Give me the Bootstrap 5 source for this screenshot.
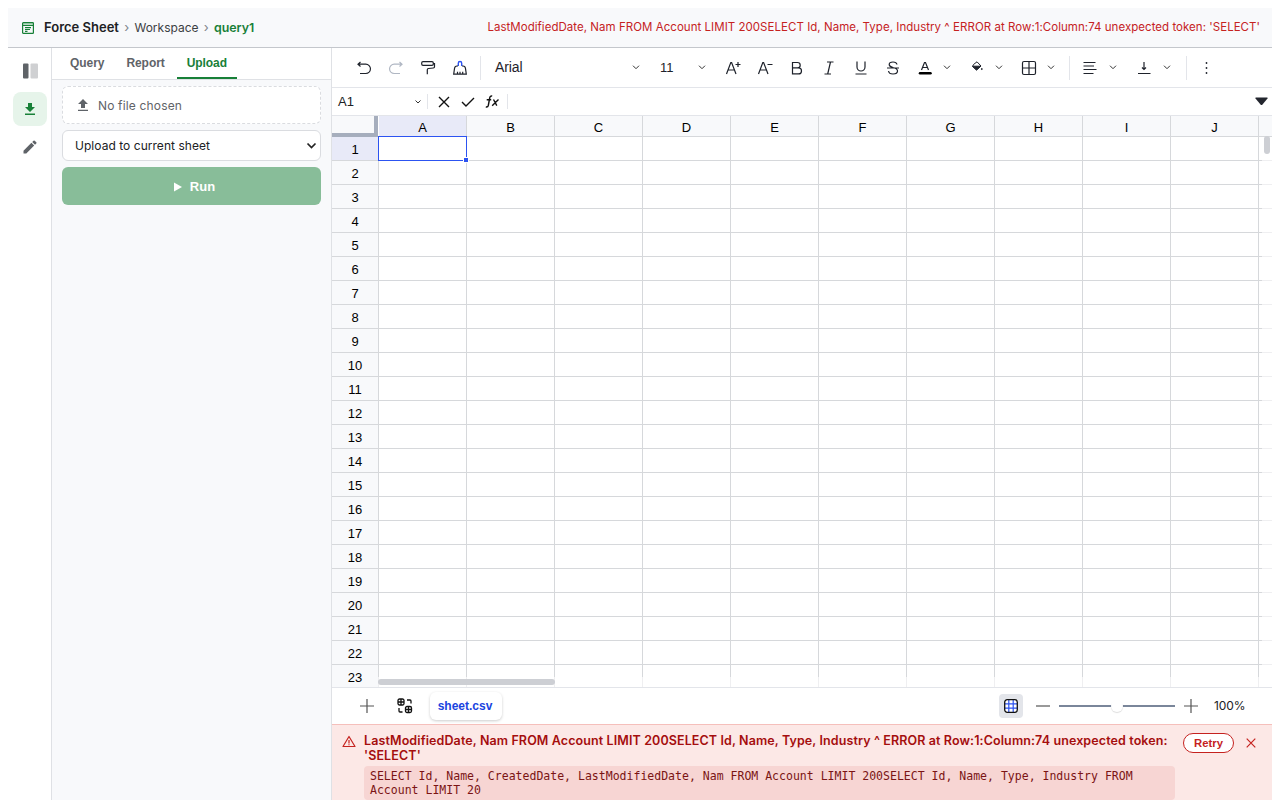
<!DOCTYPE html>
<html lang="en">
<head>
<meta charset="utf-8">
<title>Force Sheet</title>
<link rel="stylesheet" href="https://cdn.jsdelivr.net/npm/bootstrap@5.3.0/dist/css/bootstrap.min.css">
<style>
body{font:13px/1.2 Inter,sans-serif;color:#202124;background:#fff;height:100vh;overflow:hidden;padding:8px 8px 0}
svg{display:block;flex:none}
.app{height:792px}
.topbar{height:40px;background:#f8f9fb;border-bottom:1px solid #c4c7cc;padding:0 12px 0 14px}
.topbar b,.topbar span{padding-top:1px}
.crumb{color:#80868b;width:15.5px;text-align:center}
.ws{font-size:12px;width:64px;color:#3c4043}
.green{color:#188038}
.toperr{color:#c5221f;font-size:11.5px;letter-spacing:.035px}
.rail{width:44px;border-right:1px solid #dfe1e5;padding:6px 0 0 5px;color:#5f6368}
.rail .tool{width:34px;height:34px;margin-bottom:4px;border-radius:8px}
.rail .on{background:#e6f4ea;color:#188038}
.side{width:280px;background:#f8f9fb;border-right:1px solid #dfe1e5}
.tabs{height:32px;background:#fff;border-bottom:1px solid #dfe1e5;padding-left:8px;gap:2px}
.tab{font:bold 12px/31px "Liberation Sans",Arial,sans-serif;letter-spacing:-.06px;color:#5f6368;padding:0 10px;height:31px;border-bottom:2px solid transparent}
.tab.on{color:#188038;border-color:#188038}
.panel{padding:6px 10px}
.file{height:38px;border:1px dashed #dadce0;border-radius:6px;background:#fff;color:#5f6368;padding-left:15px;gap:10px;font-size:12px;letter-spacing:.16px}
.file span{padding-top:2px}
.pick{height:31px;border:1px solid #dadce0;border-radius:6px;background:#fff;margin-top:6px;padding:0 3px 0 12px;font-size:12px;letter-spacing:.04px}
.pick span{padding-top:2px}
.run{height:38px;border-radius:6px;background:#88bd99;color:#fff;margin-top:6px;gap:8px;padding:1px 0 0 6px;font:bold 13px/1.2 "Liberation Sans",Arial,sans-serif}
.main{min-width:0;flex:1}
.arial{font-family:"Liberation Sans",Arial,sans-serif}
.toolbar{height:40px;border-bottom:1px solid #e3e5ea;padding-left:24px;color:#1e222b}
.sep{width:1px;height:24px;background:#e3e5ea}
.fbar{height:28px;border-bottom:1px solid #e3e5ea}
.fbar .sep{height:15px}
.sheet{height:571px;overflow:hidden;position:relative;font:13px/23px "Liberation Sans",Arial,sans-serif;color:#000}
.line{display:grid;grid-template-columns:47px repeat(10,88px) 13px;grid-template-rows:100%;height:24px}
.line>div{border-right:1px solid #d6d8db;border-bottom:1px solid #d6d8db;text-align:center}
.line>div:last-child{border-right:0}
.line>div:first-child{background:#f8f9fb;line-height:26px}
.line.head{height:21px;line-height:23px}
.line.head>div{background:#f8f9fb}
.line.head>div:first-child{border-right:4px solid #a6aebd;border-bottom:4px solid #a6aebd;margin-right:1px}
.line.head>div.sel,.line>div.sel:first-child{background:#e8eaf8}
.cursor{position:absolute;left:46px;top:20px;width:89px;height:25px;border:1px solid #2c53f1}
.cursor i{position:absolute;right:-2px;bottom:-2px;width:4px;height:4px;background:#2c53f1;outline:1px solid #fff}
.vs{position:absolute;left:930px;top:21px;width:10px;height:550px;background:#fff9}
.vs i{position:absolute;left:2px;top:-1px;width:6px;height:18px;border-radius:3px;background:#cdcfd4}
.hs{position:absolute;left:46px;top:561px;width:894px;height:10px;background:#fff9}
.hs i{position:absolute;left:0;top:2px;width:177px;height:6px;border-radius:3px;background:#cdcfd4}
.foot{height:37px;border-top:1px solid #e3e5ea;padding-left:28px}
.sheettab{width:72px;height:28px;margin-left:17px;padding-right:2px;border-radius:6px;box-shadow:0 1px 3px #0003;color:#1a44e0;font-size:12px;font-weight:700}
.gridbtn{width:24px;height:24px;border-radius:4px;background:#e3e5ea;margin-right:13px}
.track{width:116px;height:2px;background:#7a869a;margin:0 8px 0 9px;position:relative}
.track i{position:absolute;left:52px;top:-5px;width:12px;height:12px;border-radius:50%;background:#fff;box-shadow:0 1px 1px #0002}
.fault{flex:1;background:#fce8e6;border-top:1px solid #f5bfbb;color:#a50e0e;padding:8px 0 0 10px}
.fault h6{font:600 12.5px/15px Inter,sans-serif;letter-spacing:.11px;margin:0 0 3px;width:811px}
.sql{font:11.53px/14px "DejaVu Sans Mono",monospace;background:#f7d5d3;color:#7b1414;border-radius:4px;padding:3px 6px;height:34px;width:811px}
.retry{width:51px;height:20px;border:1px solid #c5221f;border-radius:10px;background:#fff;color:#c5221f;font-weight:700;font-size:11.3px;margin-left:8px;padding-top:1px}
</style>
</head>
<body>
<div class="app d-flex flex-column">
<header class="topbar d-flex align-items-center flex-shrink-0">
<svg width="12" height="12" viewBox="0 0 12 12" fill="none" stroke="#188038" stroke-width="1.2"><path fill="#b9dcc4" stroke="none" d="M1 1h10v2H1z"/><rect x=".6" y=".6" width="10.8" height="10.8" rx=".7"/><path d="M1 3.5h10M3 5.6h6M3 7.5h5M3 9.3h2.5"/></svg>
<b class="fw-semibold" style="margin-left:10px">Force Sheet</b><span class="crumb">›</span><span class="ws">Workspace</span><span class="crumb">›</span><b class="green fw-semibold" style="font-size:12.4px">query1</b>
<span class="toperr ms-auto">LastModifiedDate, Nam FROM Account LIMIT 200SELECT Id, Name, Type, Industry ^ ERROR at Row:1:Column:74 unexpected token: 'SELECT'</span>
</header>
<div class="d-flex flex-grow-1" style="min-height:0">
<nav class="rail flex-shrink-0">
<div class="tool d-flex align-items-center justify-content-center"><svg width="15" height="16"><rect x="0" y=".5" width="5.5" height="15" rx="1" fill="#5f6368"/><rect x="7.5" y=".5" width="7.5" height="15" rx="1" fill="#cfd0d2"/></svg></div>
<div class="tool on d-flex align-items-center justify-content-center"><svg width="12" height="14" fill="currentColor"><path d="M4 1h4v4h3L6 10 1 5h3zM1 11.5h10V13H1z"/></svg></div>
<div class="tool d-flex align-items-center justify-content-center"><svg width="14" height="14" fill="currentColor"><path d="M.5 10.7 8.4 2.8l2.8 2.8-7.9 7.9H.5zM9.2 2l1.3-1.3q.6-.5 1.2 0l1.6 1.6q.5.6 0 1.2L12 4.8z"/></svg></div>
</nav>
<aside class="side flex-shrink-0">
<div class="tabs d-flex"><div class="tab">Query</div><div class="tab">Report</div><div class="tab on">Upload</div></div>
<div class="panel">
<div class="file d-flex align-items-center"><svg width="10" height="12" fill="currentColor"><path d="M5 0 10 5H7v4H3V5H0zM0 10.7h10v1.2H0z"/></svg><span>No file chosen</span></div>
<div class="pick d-flex align-items-center justify-content-between"><span>Upload to current sheet</span><svg width="11" height="8" fill="none" stroke="#222" stroke-width="1.7"><path d="m1.5 1.5 4 4 4-4"/></svg></div>
<div class="run d-flex align-items-center justify-content-center"><svg width="8" height="10" fill="#fff"><path d="M0 .5l8 4.5-8 4.500z"/></svg><span>Run</span></div>
</div>
</aside>
<main class="main d-flex flex-column">
<div class="toolbar d-flex align-items-center flex-shrink-0" id="toolbar"></div>
<div class="fbar d-flex align-items-center flex-shrink-0" style="padding-left:6px">
<span class="arial" style="width:77px">A1</span><svg width="6" height="4" fill="none" stroke="#333"><path d="m.5.5 2.5 2.5L5.5.5"/></svg><span class="sep" style="margin-left:6px"></span>
<svg width="12" height="12" fill="none" stroke="#111" stroke-width="1.4" style="margin-left:10px"><path d="M1 1l10 10M11 1 1 11"/></svg>
<svg width="14" height="12" fill="none" stroke="#111" stroke-width="1.4" style="margin-left:11px"><path d="m1 6 4 4 8-8"/></svg>
<svg width="14" height="13" fill="none" stroke="#111" stroke-width="1.4" style="margin-left:10px"><path d="M7.200 1.200Q5.200.5 4.700 3L3.300 10.500Q2.900 12.400.8 12M1.700 4.800h4.500M8.500 4.500 11.800 10.700M13.500 4.500 7.200 10.700"/></svg>
<span class="sep" style="margin-left:8px"></span>
<svg class="ms-auto" width="13" height="9" style="margin-right:4px" fill="#23262e" viewBox="0 0 13 9"><path d="M1 .5h11q1 0 .5 1L7.500 7.500q-1 1-2 0L.5 1.500Q0 .5 1 .5z"/></svg>
</div>
<div class="sheet flex-shrink-0" id="sheet"></div>
<div class="foot d-flex align-items-center flex-shrink-0">
<svg width="14" height="14" stroke="#555" stroke-width="1.2"><path d="M7 0v14M0 7h14"/></svg>
<svg width="16" height="16" style="margin-left:23px" fill="none" stroke="#111" stroke-width="1.3"><rect x="1" y="1" width="6" height="6" rx="1.500"/><path d="M4 1v6M1 4h6"/><rect x="8.500" y="8.500" width="6" height="6" rx="1.500"/><path d="M11.500 8.500v6M8.500 11.500h6M10 2h3q1 0 1 1v2.500M2 10v3q0 1 1 1h2.500"/></svg>
<div class="sheettab d-flex align-items-center justify-content-center arial">sheet.csv</div>
<div class="gridbtn ms-auto d-flex align-items-center justify-content-center"><svg width="14" height="14" fill="none"><rect x=".7" y=".7" width="12.600" height="12.600" rx="2" fill="#fff"/><path d="M4.800 1v12M9.200 1v12M1 4.800h12M1 9.200h12" stroke="#2c53f1" stroke-width="1.200"/><rect x=".7" y=".7" width="12.600" height="12.600" rx="2.500" stroke="#111" stroke-width="1.300"/></svg></div>
<svg width="14" height="14" stroke="#555" stroke-width="1.200"><path d="M0 7h14"/></svg>
<div class="track"><i></i></div>
<svg width="14" height="14" stroke="#555" stroke-width="1.200" style="margin-left:1px"><path d="M7 0v14M0 7h14"/></svg>
<span style="width:58px;margin-left:16px;font-size:12px;letter-spacing:-.1px">100%</span>
</div>
<div class="fault d-flex align-items-start">
<svg width="14" height="13" style="margin-top:2px" fill="none" stroke="#c5221f" stroke-width="1.200"><path d="M7 1.500 13 11.500H1z" stroke-linejoin="round"/><path d="M7 5v3.500M7 9.300v1"/></svg>
<div style="margin-left:8px"><h6>LastModifiedDate, Nam FROM Account LIMIT 200SELECT Id, Name, Type, Industry ^ ERROR at Row:1:Column:74 unexpected token: 'SELECT'</h6>
<div class="sql">SELECT Id, Name, CreatedDate, LastModifiedDate, Nam FROM Account LIMIT 200SELECT Id, Name, Type, Industry FROM Account LIMIT 20</div></div>
<div class="retry arial d-flex align-items-center justify-content-center">Retry</div>
<svg width="10" height="10" style="margin:5px 0 0 12px" stroke="#c5221f" stroke-width="1.200"><path d="m.7.7 8.600 8.600M9.300.7.7 9.300"/></svg>
</div>
</main>
</div>
</div>
<script>
const chevron = '<svg width="8" height="5" fill="none" stroke="#333"><path d="M1 .7 4 3.700 7 .700"/></svg>';
const icon = (d, extra = '') => `<svg width="16" height="16" fill="none" stroke="#1e222b" stroke-width="1.200">${extra}<path d="${d}"/></svg>`;
/* Each toolbar item: left edge measured from the toolbar's start, width, markup. */
const items = [
 [24,16,icon('M4.500 2 2 4.200 4.500 6.500M2 4.200H9.800a4.600 4.600 0 0 1 0 9.300H4')],
 [56,16,'<svg width="16" height="16" fill="none" stroke="#b0b7c3" stroke-width="1.200"><path d="M11.500 2l2.500 2.200L11.500 6.500M14 4.200H6.200a4.600 4.600 0 0 0 0 9.300H12"/></svg>'],
 [88,16,icon('M3 1.700h9q1.300 0 1.300 1.300v1q0 1.300-1.300 1.300H3Q1.700 5.300 1.700 4V3Q1.700 1.700 3 1.700zM13.300 3.500h1.200v3.200q0 1.200-1.200 1.300L8.500 8.500q-1.200.2-1.200 1.300V14.200')],
 [120,16,icon('M6 6H5Q2.800 6 2.500 8.500L1.700 14.200h12.600L13.500 8.500Q13.200 6 11 6H10M5.500 14V11.800M8 14V11.800M10.700 14V11.800','<path stroke="#2c53f1" stroke-width="1.400" d="M6.300 6V3.200a1.700 1.700 0 0 1 3.400 0V6"/>')],
 [148,1,'<div class="sep"></div>'],
 [163,60,'<span class="arial" style="font-size:14px;letter-spacing:-.1px">Arial</span>'],
 [300,8,chevron],
 [328,20,'<span class="arial" style="font-size:13px">11</span>'],
 [366,8,chevron],
 [393,16,icon('M1.500 14 5.800 2.500h.8L11 14M3 10h6.700M10.500 4.500h5M13 2v5')],
 [425,16,icon('M1.500 14 5.800 2.500h.8L11 14M3 10h6.700M10.500 4.500h5')],
 [457,16,icon('M3.500 2.500H8.500a2.700 2.700 0 0 1 0 5.400H3.500zM3.500 7.900H9.500a3 3 0 0 1 0 6H3.500z')],
 [489,16,icon('M6 2h6.500M3.500 14h6.500M9.500 2 6.700 14')],
 [521,16,icon('M4 1.500V7a4 4 0 0 0 8 0V1.500M2.500 14h11')],
 [553,16,icon('M12 4.500Q11.500 2 8 2 4.200 2 4.200 4.500 4.200 6.500 8 7.500q4.500 1 4.500 3.500Q12.500 14 8 14q-4 0-4.500-3M2 8h12')],
 [585,16,icon('M4.500 10 7.500 2.500h1L11.500 10M5.500 7.500h5','<path stroke="#000" stroke-width="2.500" stroke-linecap="round" d="M3 13.300h10.500"/>')],
 [611,8,chevron],
 [637,16,'<svg width="16" height="16" fill="none" stroke="#1e222b"><path d="M4.500 4.500 8 1.800l4 4.200L7.500 10 3.500 6.500z"/><path fill="#1e222b" d="M3.700 6.200h8L7.500 10z"/><circle cx="12.800" cy="9" r=".5" fill="#1e222b"/></svg>'],
 [663,8,chevron],
 [689,16,icon('M3 1.500h10q1.500 0 1.500 1.500v10q0 1.500-1.500 1.500H3q-1.500 0-1.500-1.500V3Q1.500 1.500 3 1.500zM8 1.500v13M1.500 8h13')],
 [715,8,chevron],
 [737,1,'<div class="sep"></div>'],
 [750,16,icon('M1.500 2.500h12M1.500 6h10.500M1.500 9.500h13M1.500 13.500h10')],
 [777,8,chevron],
 [804,16,icon('M8 2v7M6 7.500 8 9.500l2-2M2 13.500h12.500')],
 [831,8,chevron],
 [854,1,'<div class="sep"></div>'],
 [867,16,'<svg width="16" height="16" fill="#1e222b"><circle cx="7.500" cy="3" r=".9"/><circle cx="7.500" cy="8" r=".9"/><circle cx="7.500" cy="13" r=".9"/></svg>']
];
let edge = 24, html = '';
for (const [x, w, body] of items) {
  html += `<div class="flex-shrink-0" style="width:${w}px;margin-left:${x - edge}px">${body}</div>`;
  edge = x + w;
}
document.getElementById('toolbar').innerHTML = html;

const cols = 'ABCDEFGHIJ'.split('');
let rows = '<div class="line head"><div></div>' + cols.map((c, i) => `<div${i ? '' : ' class="sel"'}>${c}</div>`).join('') + '<div></div></div>';
for (let r = 1; r <= 23; r++)
  rows += `<div class="line"><div${r === 1 ? ' class="sel"' : ''}>${r}</div>${'<div></div>'.repeat(11)}</div>`;
document.getElementById('sheet').innerHTML = rows + '<div class="vs"><i></i></div><div class="hs"><i></i></div><div class="cursor"><i></i></div>';
</script>
<script src="https://cdn.jsdelivr.net/npm/bootstrap@5.3.0/dist/js/bootstrap.bundle.min.js"></script>
</body>
</html>
